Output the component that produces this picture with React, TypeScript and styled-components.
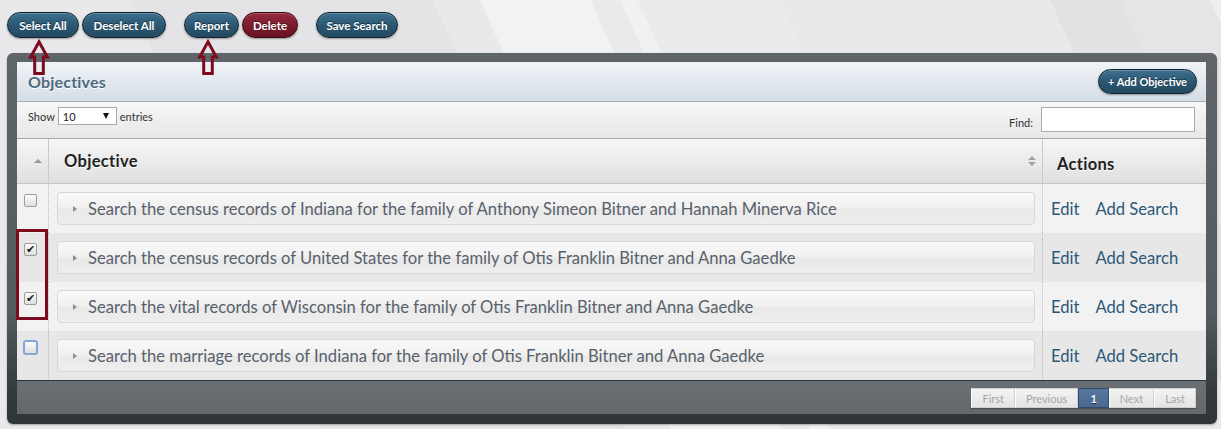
import React from 'react';
import styled, { createGlobalStyle, css } from 'styled-components';

const Global = createGlobalStyle`
  *, *::before, *::after { box-sizing: border-box; }
  html, body { margin: 0; padding: 0; }
  body {
    width: 1221px;
    height: 429px;
    overflow: hidden;
    font-family: Lato, "Open Sans", sans-serif;
    background: linear-gradient(66deg,
      #e9e9eb 0px, #e9e9eb 293px,
      #e4e4e6 293px, #e4e4e6 570px,
      #e9e9eb 570px, #e9e9eb 613px,
      #f1f2f4 613px, #f1f2f4 714px,
      #eaeaec 714px, #eaeaec 741px,
      #f0f1f3 741px, #f0f1f3 757px,
      #ebebed 757px, #ebebed 887px,
      #e9e9eb 887px, #e9e9eb 1134px,
      #e2e2e4 1134px, #e2e2e4 1198px,
      #e5e5e7 1198px, #e5e5e7 1280px,
      #eeeef0 1280px);
  }
`;

const Root = styled.div`
  position: relative;
  width: 1221px;
  height: 429px;
  padding: 12px 0 0 7px;
`;

const TopBar = styled.div`
  display: flex;
  align-items: center;
  height: 26px;
`;

const Group = styled.div`
  display: flex;
  gap: 3px;
  margin-right: 18px;
`;

const Pill = styled.button<{ $danger?: boolean; $compact?: boolean; $w: number }>`
  width: ${(p) => p.$w}px;
  height: 26px;
  padding: 0;
  text-align: center;
  border-radius: 13px;
  border: 1px solid #13242f;
  color: #fff;
  font-family: Lato, "Open Sans", sans-serif;
  font-weight: 700;
  font-size: 11.5px;
  white-space: nowrap;
  text-shadow: 0 -1px 0 rgba(0, 0, 0, 0.45);
  cursor: pointer;
  box-shadow: inset 0 1px 0 rgba(255, 255, 255, 0.22), 0 1px 2px rgba(0, 0, 0, 0.35);
  background: linear-gradient(#3e7090, #2a5670 55%, #234a61);
  ${(p) =>
    p.$danger &&
    css`
      border-color: #3a0a12;
      background: linear-gradient(#952a3e, #7a1a2c 55%, #681222);
    `}
  ${(p) =>
    p.$compact &&
    css`
      height: 25px;
      font-size: 11px;
    `}
`;

const Panel = styled.div`
  margin-top: 15px;
  width: 1210px;
  padding: 9px 11px 10px 10px;
  border-radius: 6px;
  background: linear-gradient(#60656a, #555a5e 70%, #34393c 92%, #2f3437);
  box-shadow: 0 1px 2px rgba(0, 0, 0, 0.3);
`;

const Inner = styled.div`
  display: flex;
  flex-direction: column;
`;

const Header = styled.div`
  height: 40px;
  border-bottom: 1px solid #a6adb3;
  background: linear-gradient(#f0f4f8, #d5dee5);
  display: flex;
  align-items: center;
  justify-content: space-between;
  padding: 0 9px 0 11px;
`;

const Title = styled.h2`
  margin: 0;
  font-size: 16px;
  font-weight: 700;
  color: #4d6a7e;
  text-shadow: 0 1px 0 #fff;
  letter-spacing: 0.2px;
`;

const Toolbar = styled.div`
  height: 37px;
  border-bottom: 1px solid #a8a8a8;
  background: linear-gradient(#f7f7f7, #e7e7e7);
  display: flex;
  justify-content: space-between;
  align-items: flex-start;
  padding: 5px 11px 0 11px;
  font-size: 11px;
  color: #333;
`;

const LengthControl = styled.label`
  display: flex;
  align-items: center;
  gap: 3px;
`;

const FakeSelect = styled.span`
  width: 59px;
  height: 18px;
  border: 1px solid #a9a9a9;
  background: #fff;
  display: flex;
  align-items: center;
  justify-content: space-between;
  padding: 0 7px 0 4px;
  font-size: 11px;
  color: #222;
  &::after {
    content: '';
    border-left: 3.5px solid transparent;
    border-right: 3.5px solid transparent;
    border-top: 6px solid #111;
  }
`;

const FindControl = styled.label`
  display: flex;
  align-items: center;
  gap: 8px;
`;

const FindInput = styled.input`
  width: 154px;
  height: 25px;
  border: 1px solid #aaa;
  background: #fff;
  margin: 0;
  padding: 0 3px;
`;

const FindLabel = styled.span`
  padding-top: 6px;
`;

const GridRow = styled.div`
  display: grid;
  grid-template-columns: 32px 1fr 163px;
`;

const HeadRow = styled(GridRow)`
  height: 45px;
  border-bottom: 1px solid #c4c4c4;
  background: linear-gradient(#f7f7f7, #dfdfdf);
`;

const HeadCell = styled.div<{ $divider?: boolean }>`
  display: flex;
  align-items: center;
  border-right: ${(p) => (p.$divider ? '1px solid #c9c9c9' : 'none')};
  font-size: 16.5px;
  font-weight: 700;
  color: #222;
  text-shadow: 0 1px 0 #fff;
  letter-spacing: 0.3px;
`;

const SortCell = styled(HeadCell)`
  justify-content: flex-end;
  padding-right: 6px;
`;

const ObjectiveHead = styled(HeadCell)`
  padding: 0 6px 0 15px;
  justify-content: space-between;
`;

const ActionsHead = styled(HeadCell)`
  padding: 6px 0 0 14px;
`;

const UpTri = styled.span`
  width: 0;
  height: 0;
  border-left: 4px solid transparent;
  border-right: 4px solid transparent;
  border-bottom: 4px solid #9a9a9a;
`;

const SortBoth = styled.span`
  display: flex;
  flex-direction: column;
  gap: 2px;
  &::before, &::after {
    content: '';
    border-left: 4px solid transparent;
    border-right: 4px solid transparent;
  }
  &::before { border-bottom: 4px solid #a3a3a3; }
  &::after { border-top: 4px solid #a3a3a3; }
`;

const BodyRow = styled(GridRow)<{ $alt?: boolean }>`
  height: 49px;
  background: ${(p) => (p.$alt ? '#e7e7e7' : '#f2f2f2')};
`;

const CheckCell = styled.div`
  border-right: 1px dotted #b9b9b9;
  padding: 10px 0 0 7px;
`;

const Box = styled.span<{ $focus?: boolean }>`
  display: flex;
  align-items: center;
  justify-content: center;
  width: 13px;
  height: 13px;
  border: 1px solid #9c9c9c;
  border-radius: 2px;
  background: linear-gradient(#fcfcfc, #dedede);
  font-family: "DejaVu Sans", sans-serif;
  font-size: 11px;
  font-weight: 700;
  line-height: 1;
  color: #1a1a1a;
  ${(p) =>
    p.$focus &&
    css`
      width: 15px;
      height: 15px;
      margin: -1px 0 0 -1px;
      border: 2px solid #86a6d8;
      border-radius: 3px;
    `}
`;

const ObjCell = styled.div`
  border-right: 1px dotted #b9b9b9;
  display: flex;
  align-items: center;
  padding: 0 7px 0 8px;
`;

const Card = styled.div`
  flex: 1;
  height: 33px;
  border: 1px solid #d7d7d7;
  border-radius: 4px;
  background: linear-gradient(#f9f9f9, #f1f1f1 45%, #e9e9e9 55%, #eeeeee);
  display: flex;
  align-items: center;
  padding-left: 15px;
  gap: 11px;
  font-size: 16.6px;
  color: #58616b;
`;

const Caret = styled.span`
  width: 0;
  height: 0;
  border-top: 3.5px solid transparent;
  border-bottom: 3.5px solid transparent;
  border-left: 4px solid #8d8d8d;
`;

const ActionCell = styled.div`
  display: flex;
  align-items: center;
  gap: 16px;
  padding: 0 0 0 8px;
`;

const ActionLink = styled.a`
  font-size: 16.6px;
  color: #2c5878;
  text-decoration: none;
  cursor: pointer;
`;

const Footer = styled.div`
  height: 34px;
  border-top: 1px solid #2f3336;
  background: linear-gradient(#6a6f73, #63686c);
  display: flex;
  justify-content: flex-end;
  align-items: flex-start;
  padding: 7px 10px 0 0;
`;

const Pager = styled.div`
  display: flex;
  box-shadow: 0 1px 1px rgba(0, 0, 0, 0.25);
`;

const PageBtn = styled.span<{ $active?: boolean }>`
  height: 20px;
  padding: 0 10px;
  display: flex;
  align-items: center;
  font-size: 11px;
  color: #a6a6a6;
  border: 1px solid #cfcfcf;
  border-left-color: #fdfdfd;
  background: linear-gradient(#f3f3f3, #e4e4e4);
  ${(p) =>
    p.$active &&
    css`
      color: #fff;
      font-weight: 700;
      border-color: #2f4c6c;
      background: linear-gradient(#5877a0, #4b6990);
      padding: 0 11px;
      text-shadow: 0 1px 0 #1b2c40;
    `}
`;

const ArrowMark = styled.svg<{ $left: number }>`
  position: absolute;
  top: 40px;
  left: ${(p) => p.$left}px;
  width: 20px;
  height: 35px;
  overflow: visible;
`;

const Highlight = styled.div`
  position: absolute;
  left: 16px;
  top: 229px;
  width: 32px;
  height: 91px;
  border: 3px solid #7c0c1d;
`;

const Arrow = ({ left }: { left: number }) => (
  <ArrowMark $left={left} viewBox="0 0 20 35">
    <path
      d="M10 1.8 L18.3 17 L14.3 17 L14.3 33.5 L5.7 33.5 L5.7 17 L1.7 17 Z"
      fill="none"
      stroke="#7c0c1d"
      strokeWidth="3"
      strokeLinejoin="miter"
    />
  </ArrowMark>
);

const rows = [
  { text: 'Search the census records of Indiana for the family of Anthony Simeon Bitner and Hannah Minerva Rice', checked: false },
  { text: 'Search the census records of United States for the family of Otis Franklin Bitner and Anna Gaedke', checked: true },
  { text: 'Search the vital records of Wisconsin for the family of Otis Franklin Bitner and Anna Gaedke', checked: true },
  { text: 'Search the marriage records of Indiana for the family of Otis Franklin Bitner and Anna Gaedke', checked: false, focus: true },
];

export default function App() {
  return (
    <>
      <Global />
      <Root>
        <TopBar>
          <Group>
            <Pill $w={72}>Select All</Pill>
            <Pill $w={84}>Deselect All</Pill>
          </Group>
          <Group>
            <Pill $w={55}>Report</Pill>
            <Pill $w={56} $danger>Delete</Pill>
          </Group>
          <Group>
            <Pill $w={82}>Save Search</Pill>
          </Group>
        </TopBar>
        <Panel>
          <Inner>
            <Header>
              <Title>Objectives</Title>
              <Pill $w={99} $compact>+ Add Objective</Pill>
            </Header>
            <Toolbar>
              <LengthControl>
                Show <FakeSelect>10</FakeSelect> entries
              </LengthControl>
              <FindControl>
                <FindLabel>Find:</FindLabel>
                <FindInput type="text" />
              </FindControl>
            </Toolbar>
            <HeadRow>
              <SortCell $divider>
                <UpTri />
              </SortCell>
              <ObjectiveHead $divider>
                Objective
                <SortBoth />
              </ObjectiveHead>
              <ActionsHead>Actions</ActionsHead>
            </HeadRow>
            {rows.map((r, i) => (
              <BodyRow key={i} $alt={i % 2 === 1}>
                <CheckCell>
                  <Box $focus={r.focus}>{r.checked ? '✔' : ''}</Box>
                </CheckCell>
                <ObjCell>
                  <Card>
                    <Caret />
                    {r.text}
                  </Card>
                </ObjCell>
                <ActionCell>
                  <ActionLink>Edit</ActionLink>
                  <ActionLink>Add Search</ActionLink>
                </ActionCell>
              </BodyRow>
            ))}
            <Footer>
              <Pager>
                <PageBtn>First</PageBtn>
                <PageBtn>Previous</PageBtn>
                <PageBtn $active>1</PageBtn>
                <PageBtn>Next</PageBtn>
                <PageBtn>Last</PageBtn>
              </Pager>
            </Footer>
          </Inner>
        </Panel>
        <Arrow left={29} />
        <Arrow left={198} />
        <Highlight />
      </Root>
    </>
  );
}
